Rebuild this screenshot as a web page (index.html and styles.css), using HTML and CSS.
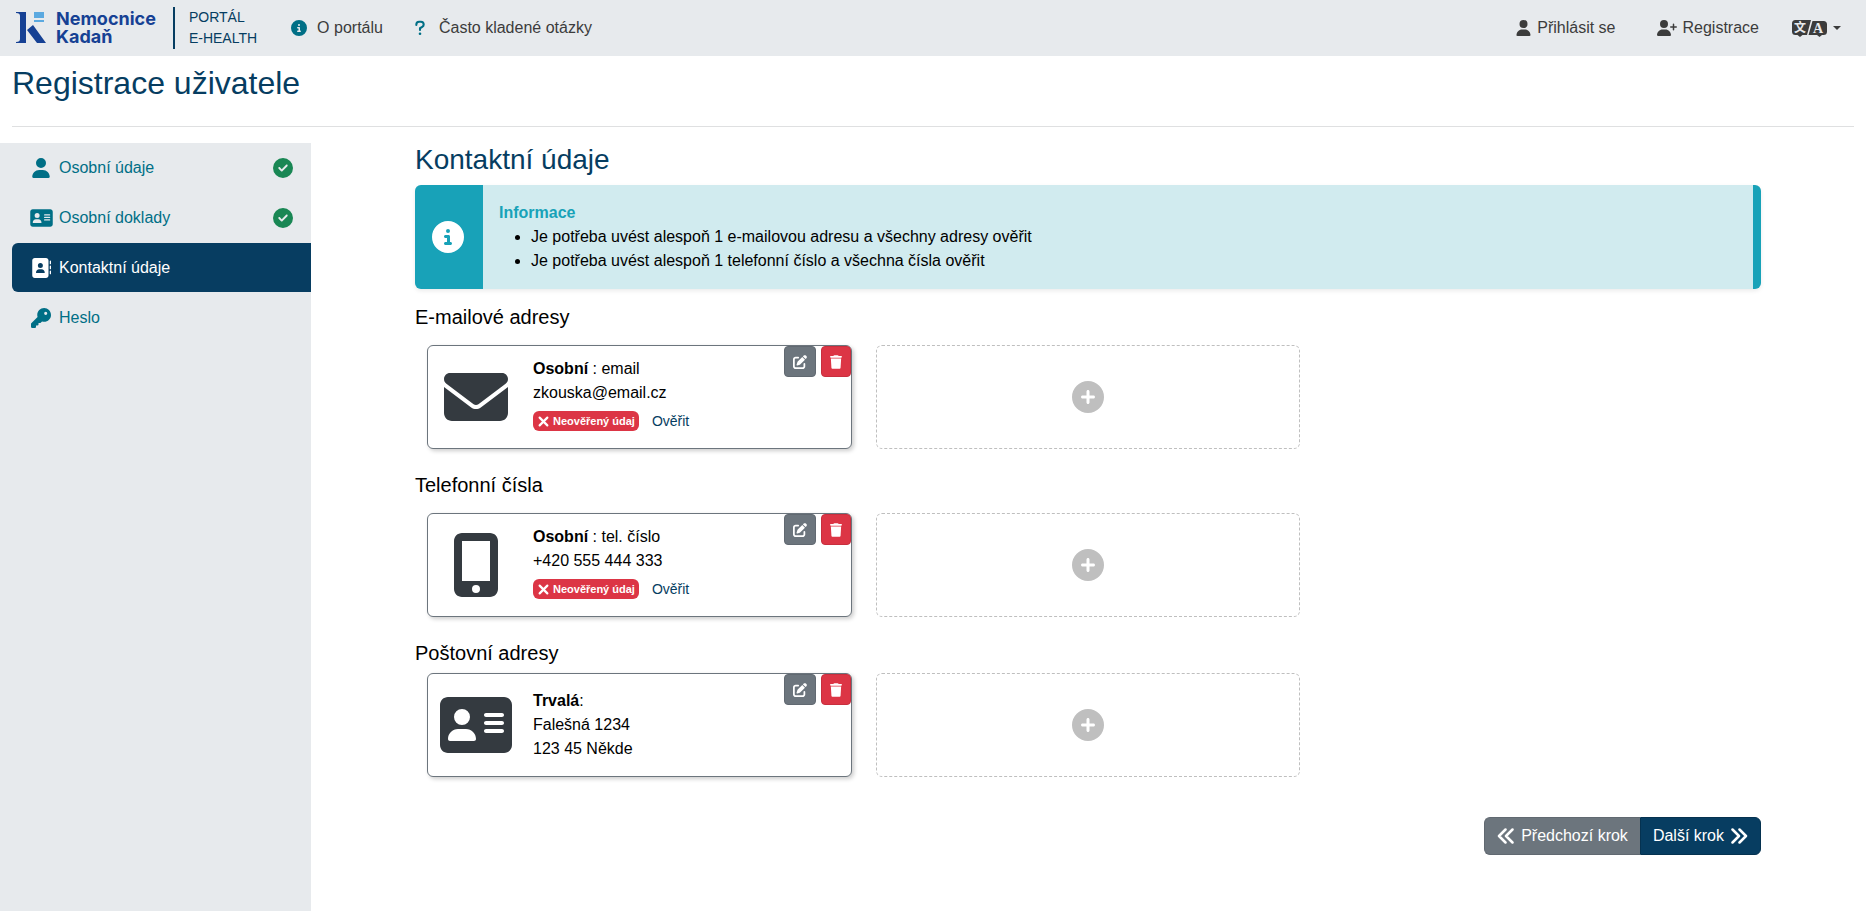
FILE: index.html
```html
<!DOCTYPE html>
<html lang="cs">
<head>
<meta charset="utf-8">
<title>Registrace uživatele</title>
<link rel="stylesheet" href="styles.css">
</head>
<body>
<svg class="sprite" aria-hidden="true">
  <symbol id="i-user" viewBox="0 0 448 512"><path d="M224 256A128 128 0 1 0 224 0a128 128 0 1 0 0 256zm-45.7 48C79.8 304 0 383.8 0 482.3C0 498.7 13.3 512 29.7 512H418.3c16.4 0 29.7-13.3 29.7-29.7C448 383.8 368.2 304 269.7 304H178.3z"/></symbol>
  <symbol id="i-user-plus" viewBox="0 0 640 512"><path d="M96 128a128 128 0 1 1 256 0A128 128 0 1 1 96 128zM0 482.3C0 383.8 79.8 304 178.3 304h91.4C368.2 304 448 383.8 448 482.3c0 16.4-13.3 29.7-29.7 29.7H29.7C13.3 512 0 498.7 0 482.3zM504 312V248H440c-13.3 0-24-10.7-24-24s10.7-24 24-24h64V136c0-13.3 10.7-24 24-24s24 10.7 24 24v64h64c13.3 0 24 10.7 24 24s-10.7 24-24 24H552v64c0 13.3-10.7 24-24 24s-24-10.7-24-24z"/></symbol>
  <symbol id="i-card" viewBox="0 0 576 512"><path d="M64 32C28.7 32 0 60.7 0 96V416c0 35.3 28.7 64 64 64H512c35.3 0 64-28.7 64-64V96c0-35.3-28.7-64-64-64H64zm80 256h64c44.2 0 80 35.8 80 80c0 8.8-7.2 16-16 16H80c-8.8 0-16-7.2-16-16c0-44.2 35.8-80 80-80zm-32-96a64 64 0 1 1 128 0 64 64 0 1 1 -128 0zm256-32H496c8.8 0 16 7.2 16 16s-7.2 16-16 16H368c-8.8 0-16-7.2-16-16s7.2-16 16-16zm0 64H496c8.8 0 16 7.2 16 16s-7.2 16-16 16H368c-8.8 0-16-7.2-16-16s7.2-16 16-16zm0 64H496c8.8 0 16 7.2 16 16s-7.2 16-16 16H368c-8.8 0-16-7.2-16-16s7.2-16 16-16z"/></symbol>
  <symbol id="i-book" viewBox="0 0 512 512"><path d="M96 0C60.7 0 32 28.7 32 64V448c0 35.3 28.7 64 64 64H384c35.3 0 64-28.7 64-64V64c0-35.3-28.7-64-64-64H96zM208 288h64c44.2 0 80 35.8 80 80c0 8.8-7.2 16-16 16H144c-8.8 0-16-7.2-16-16c0-44.2 35.8-80 80-80zm-32-96a64 64 0 1 1 128 0 64 64 0 1 1 -128 0zM512 80c0-8.8-7.2-16-16-16s-16 7.2-16 16v64c0 8.8 7.2 16 16 16s16-7.2 16-16V80zM496 192c-8.8 0-16 7.2-16 16v64c0 8.8 7.2 16 16 16s16-7.2 16-16V208c0-8.8-7.2-16-16-16zm16 144c0-8.8-7.2-16-16-16s-16 7.2-16 16v64c0 8.8 7.2 16 16 16s16-7.2 16-16V336z"/></symbol>
  <symbol id="i-key" viewBox="0 0 512 512"><path d="M336 352c97.2 0 176-78.8 176-176S433.2 0 336 0S160 78.8 160 176c0 18.7 2.9 36.8 8.3 53.7L7 391c-4.5 4.5-7 10.6-7 17v80c0 13.3 10.7 24 24 24h80c13.3 0 24-10.7 24-24V448h40c13.3 0 24-10.7 24-24V384h40c6.4 0 12.5-2.5 17-7l33.3-33.3c16.9 5.4 35 8.3 53.7 8.3zM376 96a40 40 0 1 1 0 80 40 40 0 1 1 0-80z"/></symbol>
  <symbol id="i-info" viewBox="0 0 512 512"><path d="M256 512A256 256 0 1 0 256 0a256 256 0 1 0 0 512zM216 336h24V272H216c-13.3 0-24-10.7-24-24s10.7-24 24-24h48c13.3 0 24 10.7 24 24v88h8c13.3 0 24 10.7 24 24s-10.7 24-24 24H216c-13.3 0-24-10.7-24-24s10.7-24 24-24zm40-208a32 32 0 1 1 0 64 32 32 0 1 1 0-64z"/></symbol>
  <symbol id="i-question" viewBox="0 0 320 512"><path d="M42 160v-10c0-52 40-92 88-92h60c50 0 88 40 88 88 0 34-18 60-46 76l-72 42v54" fill="none" stroke="currentColor" stroke-width="66" stroke-linecap="round" stroke-linejoin="round"/><circle cx="160" cy="440" r="42"/></symbol>
  <symbol id="i-check" viewBox="0 0 512 512"><path d="M256 512A256 256 0 1 0 256 0a256 256 0 1 0 0 512zM369 209L241 337c-9.4 9.4-24.6 9.4-33.9 0l-64-64c-9.4-9.4-9.4-24.6 0-33.9s24.6-9.4 33.9 0l47 47L335 175c9.4-9.4 24.6-9.4 33.9 0s9.4 24.6 0 33.9z"/></symbol>
  <symbol id="i-plus" viewBox="0 0 512 512"><path d="M256 512A256 256 0 1 0 256 0a256 256 0 1 0 0 512zM232 344V280H168c-13.3 0-24-10.7-24-24s10.7-24 24-24h64V168c0-13.3 10.7-24 24-24s24 10.7 24 24v64h64c13.3 0 24 10.7 24 24s-10.7 24-24 24H280v64c0 13.3-10.7 24-24 24s-24-10.7-24-24z"/></symbol>
  <symbol id="i-mail" viewBox="0 0 512 512"><path d="M48 64C21.5 64 0 85.5 0 112c0 15.1 7.1 29.3 19.2 38.4L236.8 313.6c11.4 8.5 27 8.5 38.4 0L492.8 150.4c12.1-9.1 19.2-23.3 19.2-38.4c0-26.5-21.5-48-48-48H48zM0 176V384c0 35.3 28.7 64 64 64H448c35.3 0 64-28.7 64-64V176L294.4 339.2c-22.8 17.1-54 17.1-76.8 0L0 176z"/></symbol>
  <symbol id="i-phone" viewBox="0 0 352 512"><path fill-rule="evenodd" d="M64 0C28.7 0 0 28.7 0 64V448c0 35.3 28.7 64 64 64H288c35.3 0 64-28.7 64-64V64c0-35.3-28.7-64-64-64H64zM64 64H288V384H64zM176 416a32 32 0 1 1 0 64 32 32 0 1 1 0-64z"/></symbol>
  <symbol id="i-trash" viewBox="0 0 448 512"><path d="M135.2 17.7L128 32H32C14.3 32 0 46.3 0 64S14.3 96 32 96H416c17.7 0 32-14.3 32-32s-14.3-32-32-32H320l-7.2-14.3C307.4 6.8 296.3 0 284.2 0H163.8c-12.1 0-23.2 6.8-28.6 17.7zM416 128H32L53.2 467c1.6 25.3 22.6 45 47.9 45H346.9c25.3 0 46.3-19.7 47.9-45L416 128z"/></symbol>
  <symbol id="i-edit" viewBox="0 0 512 512"><path d="M471.6 21.7c-21.9-21.9-57.3-21.9-79.2 0L362.3 51.7l97.9 97.9 30.1-30.1c21.9-21.9 21.9-57.3 0-79.2L471.6 21.7zm-299.2 220c-6.1 6.1-10.8 13.6-13.5 21.9l-29.6 88.8c-2.9 8.6-.6 18.1 5.8 24.6s15.9 8.7 24.6 5.8l88.8-29.6c8.2-2.7 15.7-7.4 21.9-13.5L437.7 172.3 339.7 74.3 172.4 241.7zM96 64C43 64 0 107 0 160V416c0 53 43 96 96 96H352c53 0 96-43 96-96V320c0-17.7-14.3-32-32-32s-32 14.3-32 32v96c0 17.7-14.3 32-32 32H96c-17.7 0-32-14.3-32-32V160c0-17.7 14.3-32 32-32h96c17.7 0 32-14.3 32-32s-14.3-32-32-32H96z"/></symbol>
  <symbol id="i-x" viewBox="0 0 10 10"><path d="M1.5 1.5l7 7M8.5 1.5l-7 7" fill="none" stroke="currentColor" stroke-width="2" stroke-linecap="round"/></symbol>
  <symbol id="i-left" viewBox="0 0 18 16"><path d="M8.5 1.5L2 8l6.5 6.5M15.5 1.5L9 8l6.5 6.5" fill="none" stroke="currentColor" stroke-width="2.5" stroke-linecap="round" stroke-linejoin="round"/></symbol>
  <symbol id="i-right" viewBox="0 0 18 16"><path d="M2.5 1.5L9 8l-6.5 6.5M9.5 1.5L16 8l-6.5 6.5" fill="none" stroke="currentColor" stroke-width="2.5" stroke-linecap="round" stroke-linejoin="round"/></symbol>
</svg>

<header class="navbar">
  <a class="brand" href="#">
    <svg class="brand-mark" viewBox="0 0 30 32" aria-hidden="true">
      <path fill="#164194" d="M0 0h10v31H0v-1c3 0 4-1 4-3V4c0-2-1-3-4-3zM17 13l13 18h-9L11 18z"/>
      <path fill="#5ba9e0" d="M18 0h10v6H18zM18 8h10v2H18z"/>
    </svg>
    <span class="brand-name">Nemocnice<br>Kadaň</span>
    <span class="brand-sub">PORTÁL<br>E-HEALTH</span>
  </a>
  <nav class="nav nav-main">
    <a href="#"><svg class="icon teal s16"><use href="#i-info"/></svg>O portálu</a>
    <a href="#"><svg class="icon teal question"><use href="#i-question"/></svg>Často kladené otázky</a>
  </nav>
  <nav class="nav nav-user">
    <a href="#"><svg class="icon user"><use href="#i-user"/></svg>Přihlásit se</a>
    <a href="#"><svg class="icon user-plus"><use href="#i-user-plus"/></svg>Registrace</a>
    <button class="lang" type="button" aria-label="Jazyk">
      <svg class="lang-icon" viewBox="0 0 35 17" aria-hidden="true">
        <path d="M3.5 0H19l-4 15h-4.5l-2.5 2-2.5-2h-2A3.5 3.5 0 0 1 0 11.5v-8A3.5 3.5 0 0 1 3.5 0zM20.5 1h11A3.5 3.5 0 0 1 35 4.5v7a3.5 3.5 0 0 1-3.5 3.5H30l-2.5 2-2.5-2h-8.5z"/>
        <text class="lang-cjk" x="8" y="12" text-anchor="middle">文</text>
        <text class="lang-latin" x="26" y="13" text-anchor="middle">A</text>
      </svg>
      <span class="caret"></span>
    </button>
  </nav>
</header>

<div class="title-bar"><h1>Registrace uživatele</h1></div>

<div class="layout">
  <aside class="sidebar">
    <a class="step" href="#"><span class="step-icon"><svg class="icon p-user"><use href="#i-user"/></svg></span>Osobní údaje<svg class="icon done"><use href="#i-check"/></svg></a>
    <a class="step" href="#"><span class="step-icon"><svg class="icon p-card"><use href="#i-card"/></svg></span>Osobní doklady<svg class="icon done"><use href="#i-check"/></svg></a>
    <a class="step active" href="#" aria-current="step"><span class="step-icon"><svg class="icon s20"><use href="#i-book"/></svg></span>Kontaktní údaje</a>
    <a class="step" href="#"><span class="step-icon"><svg class="icon s20"><use href="#i-key"/></svg></span>Heslo</a>
  </aside>

  <main class="content">
    <h2>Kontaktní údaje</h2>
    <div class="callout">
      <div class="callout-icon"><svg class="icon s32"><use href="#i-info"/></svg></div>
      <div class="callout-body">
        <strong>Informace</strong>
        <ul>
          <li>Je potřeba uvést alespoň 1 e-mailovou adresu a všechny adresy ověřit</li>
          <li>Je potřeba uvést alespoň 1 telefonní číslo a všechna čísla ověřit</li>
        </ul>
      </div>
    </div>

    <section class="group">
      <h3>E-mailové adresy</h3>
      <div class="cards spaced">
        <article class="card">
          <div class="card-icon"><svg class="icon s64"><use href="#i-mail"/></svg></div>
          <div class="card-text">
            <div><b>Osobní</b> : email</div>
            <div>zkouska@email.cz</div>
            <div class="verify"><span class="badge"><svg class="icon x"><use href="#i-x"/></svg>Neověřený údaj</span><a href="#">Ověřit</a></div>
          </div>
          <div class="card-actions">
            <button class="btn-sm gray" type="button" aria-label="Upravit"><svg class="icon s14"><use href="#i-edit"/></svg></button>
            <button class="btn-sm red" type="button" aria-label="Smazat"><svg class="icon bin"><use href="#i-trash"/></svg></button>
          </div>
        </article>
        <button class="add" type="button" aria-label="Přidat"><svg class="icon s32"><use href="#i-plus"/></svg></button>
      </div>
    </section>

    <section class="group">
      <h3>Telefonní čísla</h3>
      <div class="cards spaced">
        <article class="card">
          <div class="card-icon"><svg class="icon phone"><use href="#i-phone"/></svg></div>
          <div class="card-text">
            <div><b>Osobní</b> : tel. číslo</div>
            <div>+420 555 444 333</div>
            <div class="verify"><span class="badge"><svg class="icon x"><use href="#i-x"/></svg>Neověřený údaj</span><a href="#">Ověřit</a></div>
          </div>
          <div class="card-actions">
            <button class="btn-sm gray" type="button" aria-label="Upravit"><svg class="icon s14"><use href="#i-edit"/></svg></button>
            <button class="btn-sm red" type="button" aria-label="Smazat"><svg class="icon bin"><use href="#i-trash"/></svg></button>
          </div>
        </article>
        <button class="add" type="button" aria-label="Přidat"><svg class="icon s32"><use href="#i-plus"/></svg></button>
      </div>
    </section>

    <section class="group">
      <h3>Poštovní adresy</h3>
      <div class="cards">
        <article class="card">
          <div class="card-icon"><svg class="icon address"><use href="#i-card"/></svg></div>
          <div class="card-text">
            <div><b>Trvalá</b>:</div>
            <div>Falešná 1234</div>
            <div>123 45 Někde</div>
          </div>
          <div class="card-actions">
            <button class="btn-sm gray" type="button" aria-label="Upravit"><svg class="icon s14"><use href="#i-edit"/></svg></button>
            <button class="btn-sm red" type="button" aria-label="Smazat"><svg class="icon bin"><use href="#i-trash"/></svg></button>
          </div>
        </article>
        <button class="add" type="button" aria-label="Přidat"><svg class="icon s32"><use href="#i-plus"/></svg></button>
      </div>
    </section>

    <div class="pager">
      <button class="btn prev" type="button"><svg class="icon arrows"><use href="#i-left"/></svg>Předchozí krok</button>
      <button class="btn next" type="button">Další krok<svg class="icon arrows"><use href="#i-right"/></svg></button>
    </div>
  </main>
</div>
</body>
</html>
```
FILE: styles.css
```css
* { box-sizing: border-box; }
body {
  margin: 0;
  min-height: 100vh;
  display: flex;
  flex-direction: column;
  font: 16px/24px "Liberation Sans", Arial, sans-serif;
  color: #000;
  background: #fff;
}
h1, h2, h3, ul { margin: 0; font-weight: 400; }
a { color: inherit; text-decoration: none; }
button { font: inherit; color: inherit; cursor: pointer; }
.sprite { display: none; }

.icon { display: block; flex: none; fill: currentColor; }
.teal { color: #006f86; }
.s14 { width: 14px; height: 14px; }
.s16 { width: 16px; height: 16px; }
.s20 { width: 20px; height: 20px; }
.s32 { width: 32px; height: 32px; }
.s64 { width: 64px; height: 64px; }

.navbar {
  display: flex;
  align-items: center;
  height: 56px;
  padding: 0 25px 0 16px;
  background: #e7eaed;
  color: #3c3c3c;
}
.brand { display: flex; align-items: center; }
.brand-mark { width: 30px; height: 32px; margin-right: 10px; }
.brand-name { font: 700 18px/18px Inter, sans-serif; color: #164194; }
.brand-sub {
  margin-left: 17px;
  padding-left: 14px;
  border-left: 2px solid #063d61;
  font-size: 14px;
  line-height: 21px;
  color: #063d61;
}
.nav { display: flex; align-items: center; }
.nav a { display: flex; align-items: center; }
.nav-main { margin-left: 34px; gap: 32px; }
.nav-main a { gap: 10px; }
.question { width: 10px; height: 16px; margin-right: 4px; }
.nav-user { margin-left: auto; gap: 41px; }
.nav-user a { gap: 6px; }
.user { width: 15px; height: 16px; }
.user-plus { width: 20px; height: 16px; }
.lang {
  display: flex;
  align-items: center;
  gap: 6px;
  margin-left: -8px;
  padding: 0;
  border: 0;
  background: none;
}
.lang-icon { width: 35px; height: 17px; overflow: visible; fill: currentColor; }
.lang-icon text { fill: #e7eaed; }
.lang-cjk { font: 700 12px "Noto Sans CJK SC", sans-serif; }
.lang-latin { font: 700 14px "Liberation Serif", serif; }
.caret { border: 4px solid transparent; border-top-color: currentColor; border-bottom: 0; }

.title-bar { margin: 0 12px 16px; padding: 8px 0 24px; border-bottom: 1px solid #dfe0e1; }
h1 { font-size: 32px; line-height: 38px; color: #063d61; }

.layout { flex: 1; display: flex; }
.sidebar {
  flex: none;
  width: calc(100% / 6);
  padding-left: 12px;
  display: flex;
  flex-direction: column;
  gap: 1px;
  background: #e7eaed;
}
.step {
  display: flex;
  align-items: center;
  min-height: 49px;
  padding: 0 18px 0 16px;
  border-radius: 6px 0 0 6px;
  color: #006f86;
}
.step.active { background: #073d61; color: #fff; }
.step-icon { display: flex; justify-content: center; width: 26px; margin-right: 5px; }
.p-user { width: 18px; height: 20px; }
.p-card { width: 23px; height: 20px; }
.done { width: 20px; height: 20px; margin-left: auto; color: #198754; }

.content { flex: 1; padding: 0 105px 56px 104px; }
h2 { margin-bottom: 8px; font-size: 28px; line-height: 34px; color: #063d61; }
.callout {
  display: flex;
  margin-bottom: 16px;
  overflow: hidden;
  border-right: 8px solid #18a2b8;
  border-radius: 6px;
  background: #d1ebef;
  box-shadow: 0 2px 4px rgba(0, 0, 0, .08);
}
.callout-icon { display: flex; align-items: center; justify-content: center; width: 68px; padding-right: 2px; background: #18a2b8; color: #fff; }
.callout-body { padding: 16px; }
.callout-body strong { display: block; color: #18a2b8; }
.callout-body ul { padding-left: 32px; }

.group { margin-bottom: 24px; }
h3 { margin-bottom: 8px; font-size: 20px; line-height: 24px; }
.cards { display: grid; grid-template-columns: repeat(3, 1fr); gap: 24px; padding: 0 12px; }
.cards.spaced { padding-top: 8px; }
.card {
  position: relative;
  display: flex;
  align-items: center;
  min-height: 104px;
  border: 1px solid #6c757d;
  border-radius: 6px;
  background: #fff;
  box-shadow: 2px 2px 4px rgba(0, 0, 0, .2);
}
.card-icon { display: flex; justify-content: center; width: 97px; margin-right: 8px; color: #343a40; }
.phone { width: 44px; height: 64px; }
.address { width: 72px; height: 64px; }
.card-actions { position: absolute; top: 0; right: 0; display: flex; gap: 5px; }
.btn-sm { display: flex; align-items: center; height: 31px; padding: 0 8px; border: 1px solid; border-radius: 4px; color: #fff; }
.bin { width: 12px; height: 14px; }
.gray { background: #6c757d; border-color: #616971; }
.red { background: #dc3545; border-color: #c82f3e; }
.verify { display: flex; align-items: center; height: 32px; font-size: 14px; }
.verify a { color: #063d61; }
.badge {
  display: flex;
  align-items: center;
  gap: 4px;
  height: 20px;
  margin-right: 13px;
  padding: 0 4px 0 5px;
  border-radius: 6px;
  background: #dc3545;
  color: #fff;
  font-size: 11px;
  font-weight: 700;
}
.x { width: 11px; height: 11px; }
.add {
  display: flex;
  align-items: center;
  justify-content: center;
  border: 1px dashed #bfbfbf;
  border-radius: 6px;
  background: none;
  color: #bfbfbf;
}

.pager { display: flex; justify-content: flex-end; padding-top: 16px; }
.btn { display: flex; align-items: center; gap: 6px; height: 38px; padding: 0 12px; border: 1px solid; color: #fff; }
.prev { border-radius: 6px 0 0 6px; background: #6c757d; border-color: #616971; border-right: 0; }
.next { border-radius: 0 6px 6px 0; background: #073d61; border-color: #053250; }
.arrows { width: 18px; height: 16px; }
```
